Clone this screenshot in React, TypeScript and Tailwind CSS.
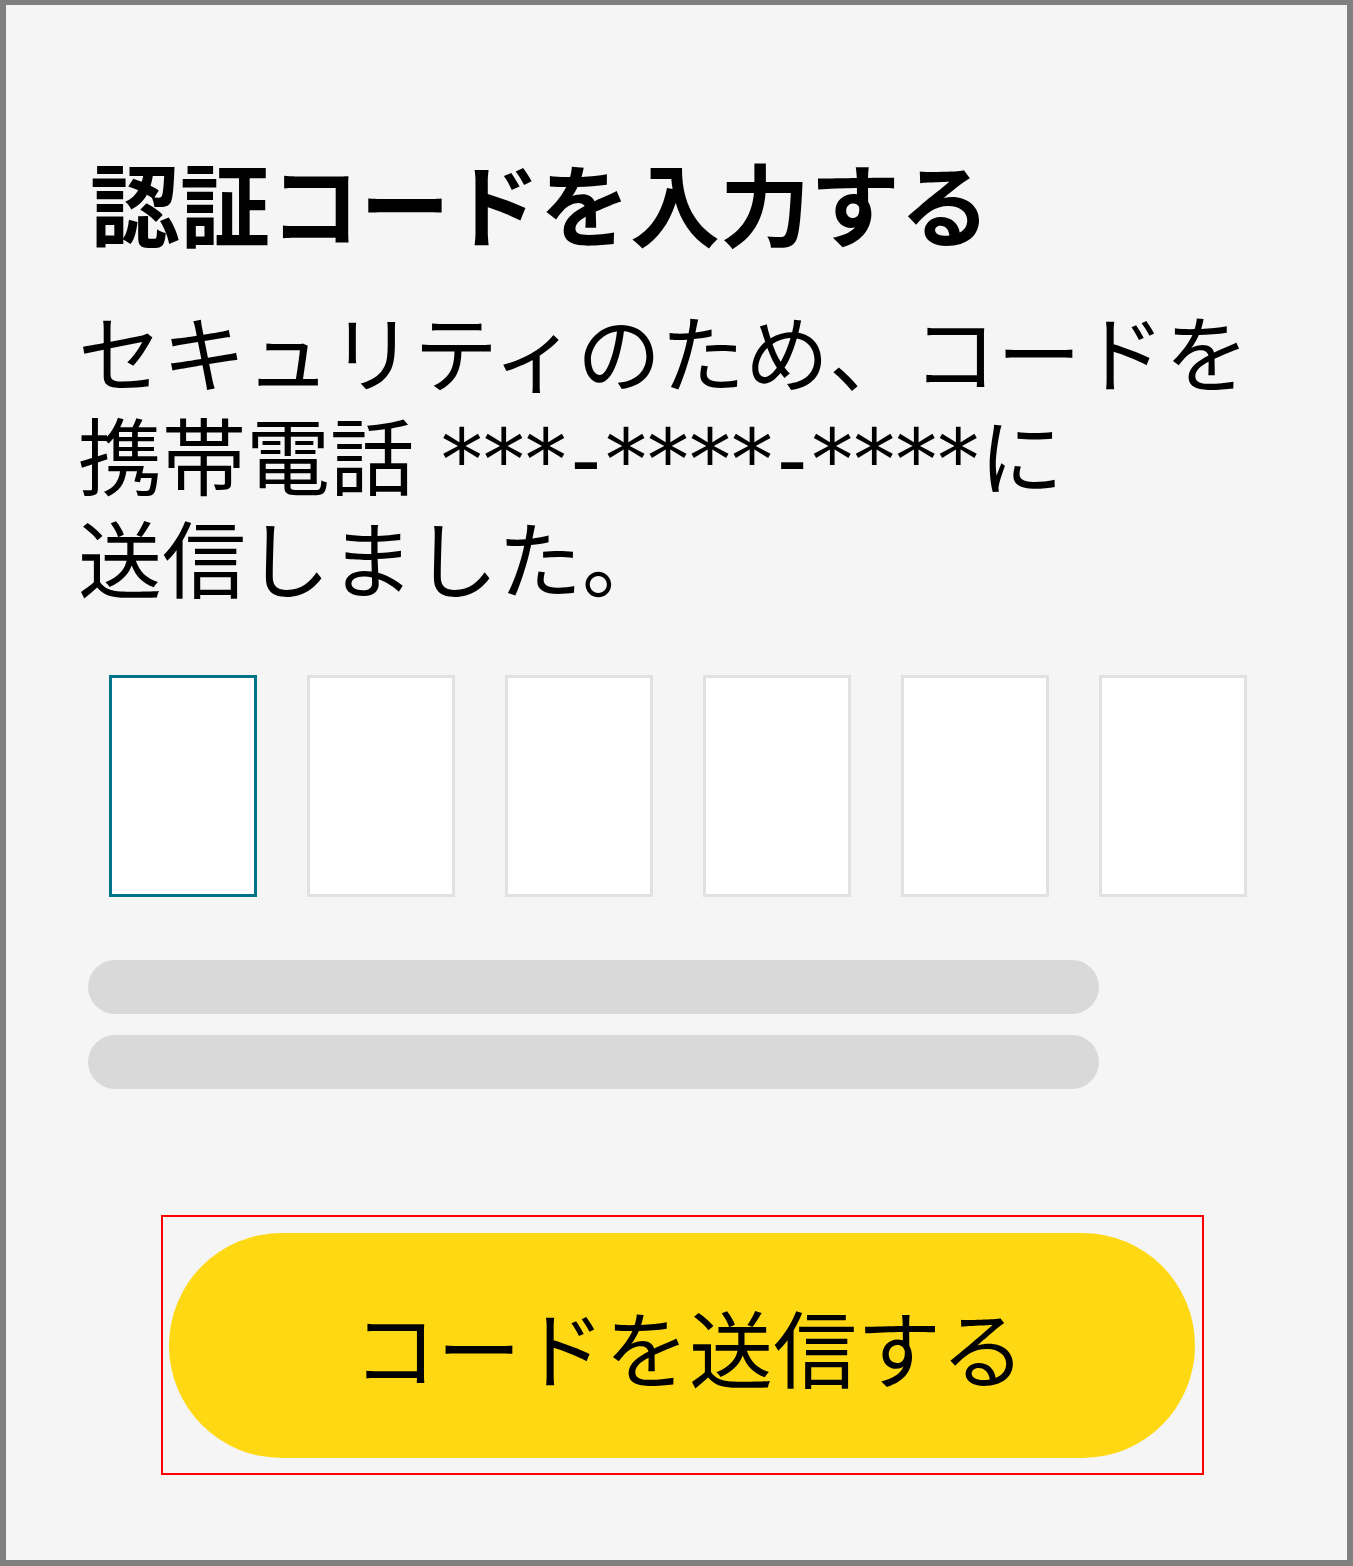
import { useState } from 'react';

const font = { fontFamily: '"Noto Sans CJK JP", "Noto Sans", sans-serif' };

function App() {
  const [digits, setDigits] = useState(['', '', '', '', '', '']);

  return (
    <div
      className="box-border h-[1566px] w-[1353px] border-[6px] border-t-[5px] border-[#808080] bg-[#f5f5f5] text-black"
      style={font}
    >
      <div className="flex flex-col pt-[151px]">
        <h1 className="ml-[84px] text-[90px] font-bold leading-none">認証コードを入力する</h1>

        <p className="ml-[72px] mt-[52px] text-[84px] leading-[103px]">
          セキュリティのため、コードを
          <br />
          携帯電話
          <span className="font-['DejaVu_Sans',sans-serif] leading-[80px]">
            {' ***'}
            <span className="mx-[4px]">-</span>
            ****
            <span className="mx-[4px]">-</span>
            ****
          </span>
          に
          <br />
          送信しました。
        </p>

        <div className="ml-[103px] mt-[68px] flex gap-[50px]">
          {digits.map((d, i) => (
            <input
              key={i}
              value={d}
              maxLength={1}
              inputMode="numeric"
              onChange={(e) => {
                const next = [...digits];
                next[i] = e.target.value;
                setDigits(next);
              }}
              className={
                i === 0
                  ? 'h-[222px] w-[148px] border-[3px] border-[#00748a] bg-white text-center text-[80px] outline-none'
                  : 'h-[222px] w-[148px] border-[3px] border-[#dfe2e1] bg-white text-center text-[80px] outline-none'
              }
            />
          ))}
        </div>

        <div className="ml-[82px] mt-[63px] flex flex-col gap-[21px]">
          <div className="h-[54px] w-[1011px] rounded-full bg-[#d9d9d9]" />
          <div className="h-[54px] w-[1011px] rounded-full bg-[#d9d9d9]" />
        </div>

        <div className="ml-[155px] mt-[126px] box-border w-[1043px] border-2 border-[#ff0000] px-[6px] pb-[15px] pt-[16px]">
          <button
            type="button"
            className="flex h-[225px] w-[1026px] items-center justify-center rounded-full bg-[#ffd814] pl-[14px] text-[84px] text-black"
          >
            コードを送信する
          </button>
        </div>
      </div>
    </div>
  );
}

export default App;
